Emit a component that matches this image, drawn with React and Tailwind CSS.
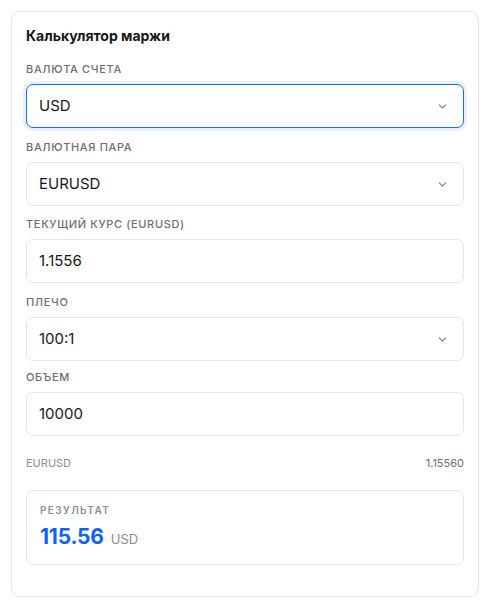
import React, { useState } from 'react'
import { ChevronDown } from 'lucide-react'

const Label = ({ children }) => (
  <div className="text-[11px] leading-4 font-medium uppercase tracking-[0.06em] text-[#6b6f76] mb-[7px]">
    {children}
  </div>
)

const SelectField = ({ value, focused }) => (
  <div
    className={
      'h-[44px] flex items-center justify-between pl-[12px] pr-[14px] rounded-[7px] bg-white border ' +
      (focused ? 'border-[#1a6cff] ring-[3px] ring-[#1a6cff]/10' : 'border-[#e3e5e9]')
    }
  >
    <span className="text-[15px] text-[#17181a]">{value}</span>
    <ChevronDown className="w-[13px] h-[13px] text-[#7a7d83]" strokeWidth={2} />
  </div>
)

const InputField = ({ value }) => (
  <div className="h-[44px] flex items-center pl-[12px] rounded-[7px] bg-white border border-[#e3e5e9]">
    <span className="text-[15px] text-[#17181a]">{value}</span>
  </div>
)

export default function App() {
  const [rate] = useState(1.1556)
  const volume = 10000
  const leverage = 100
  const margin = ((volume * rate) / leverage).toFixed(2)

  return (
    <div className="min-h-screen bg-white pt-[11px] pl-[11px]" style={{ fontFamily: 'Inter, "Noto Sans", sans-serif' }}>
      <div className="w-[468px] border border-[#e4e6ea] rounded-[9px] bg-white px-[14px] pt-[14px] pb-[31px]">
        <h2 className="text-[14px] leading-5 font-bold text-[#16171a] mb-[15px]">Калькулятор маржи</h2>

        <div>
          <Label>Валюта счета</Label>
          <SelectField value="USD" focused />
        </div>
        <div className="mt-[11px]">
          <Label>Валютная пара</Label>
          <SelectField value="EURUSD" />
        </div>
        <div className="mt-[10px]">
          <Label>Текущий курс (EURUSD)</Label>
          <InputField value={rate} />
        </div>
        <div className="mt-[11px]">
          <Label>Плечо</Label>
          <SelectField value="100:1" />
        </div>
        <div className="mt-[8px]">
          <Label>Объем</Label>
          <InputField value={volume} />
        </div>

        <div className="flex justify-between items-center mt-[19px] text-[11px] leading-4 text-[#8a8d93]">
          <span>EURUSD</span>
          <span className="text-[#6b6e74]">{rate.toFixed(5)}</span>
        </div>

        <div className="mt-[19px] border border-[#e3e5e9] rounded-[7px] px-[13px] pt-[11px] pb-[13px]">
          <div className="text-[10px] leading-4 font-semibold uppercase tracking-[0.14em] text-[#8a8d93]">Результат</div>
          <div className="flex items-baseline gap-[7px] mt-[5px]">
            <span className="text-[21px] leading-7 font-bold text-[#0f62ff] tracking-[-0.01em]">{margin}</span>
            <span className="text-[13px] text-[#8a8d93]">USD</span>
          </div>
        </div>
      </div>
    </div>
  )
}
